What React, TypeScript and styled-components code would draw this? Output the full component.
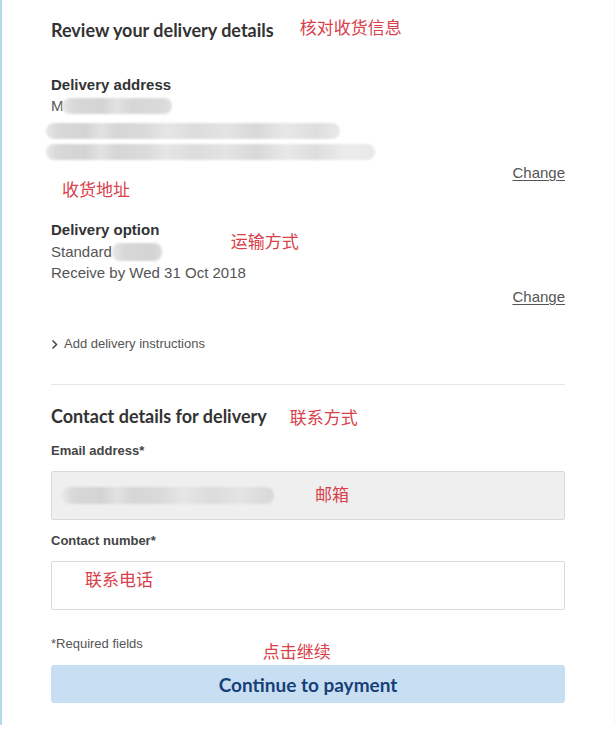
import React from "react";
import styled, { createGlobalStyle } from "styled-components";

const Global = createGlobalStyle`
  html, body { margin: 0; padding: 0; background: #ffffff; }
  body { font-family: "Liberation Sans", Arial, sans-serif; color: #444; }
`;

const Page = styled.div`
  width: 615px;
  box-sizing: border-box;
  border-left: 2px solid #b3dae9;
  border-right: 1px solid #f1f7f9;
  padding: 18px 49px 22px 49px;
  display: flex;
  flex-direction: column;
`;

const Note = styled.span<{ $mt?: number; $ml?: number }>`
  font-family: "Noto Sans CJK SC", sans-serif;
  font-size: 17px;
  line-height: 22px;
  color: #d8404a;
  margin-top: ${(p) => p.$mt ?? 0}px;
  margin-left: ${(p) => p.$ml ?? 0}px;
  white-space: nowrap;
`;

const HeadRow = styled.div<{ $gap: number; $mt?: number; $align?: string }>`
  display: flex;
  align-items: ${(p) => p.$align ?? "center"};
  gap: ${(p) => p.$gap}px;
  margin-top: ${(p) => p.$mt ?? 0}px;
`;

const Heading = styled.h2`
  margin: 0;
  font-family: Lato, "Open Sans", sans-serif;
  font-weight: 700;
  font-size: 18px;
  line-height: 24px;
  color: #333;
`;

const Label = styled.div<{ $mt?: number }>`
  font-weight: 700;
  font-size: 15px;
  line-height: 18px;
  color: #333;
  margin-top: ${(p) => p.$mt ?? 0}px;
`;

const Text = styled.div<{ $mt?: number }>`
  font-size: 15px;
  line-height: 20px;
  color: #555;
  margin-top: ${(p) => p.$mt ?? 0}px;
  display: flex;
  align-items: center;
`;

const Blur = styled.div<{ $w: number; $mt?: number; $ml?: number; $h?: number }>`
  width: ${(p) => p.$w}px;
  height: ${(p) => p.$h ?? 16}px;
  margin-top: ${(p) => p.$mt ?? 0}px;
  margin-left: ${(p) => p.$ml ?? 0}px;
  border-radius: 8px;
  filter: blur(1px);
  background: linear-gradient(
    90deg,
    #e8e8e8 0px,
    #d8d8d8 12px,
    #d4d4d4 40px,
    #e2e2e2 55px,
    #d6d6d6 70px,
    #dadada 100px,
    #e6e6e6 120px,
    #dcdcdc 150px,
    #e4e4e4 180px,
    #d8d8d8 210px,
    #e8e8e8 240px,
    #dedede 270px,
    #ececec 300px,
    #e6e6e6 340px
  );
`;

const ChangeRow = styled.div<{ $mt?: number }>`
  display: flex;
  justify-content: space-between;
  align-items: flex-start;
  margin-top: ${(p) => p.$mt ?? 0}px;
`;

const ChangeLink = styled.a`
  font-size: 15px;
  line-height: 20px;
  color: #555;
  text-decoration: underline;
  text-underline-offset: 2px;
  margin-left: auto;
  cursor: pointer;
`;

const OptionRow = styled.div`
  display: flex;
  align-items: flex-start;
  margin-top: 21px;
`;

const OptionBlock = styled.div`
  display: flex;
  flex-direction: column;
`;

const Instructions = styled.div`
  display: flex;
  align-items: center;
  gap: 6px;
  margin-top: 28px;
  font-size: 13px;
  line-height: 18px;
  color: #555;
`;

const Divider = styled.hr`
  border: none;
  border-top: 1px solid #e6e6e6;
  margin: 31px 0 0 0;
  width: 514px;
`;

const FieldLabel = styled.div<{ $mt: number }>`
  font-weight: 700;
  font-size: 13px;
  line-height: 18px;
  color: #444;
  margin-top: ${(p) => p.$mt}px;
`;

const Field = styled.div<{ $filled?: boolean }>`
  margin-top: 11px;
  width: 514px;
  height: 49px;
  box-sizing: border-box;
  border: 1px solid #d9d9d9;
  border-radius: 2px;
  background: ${(p) => (p.$filled ? "#efefef" : "#ffffff")};
  display: flex;
  align-items: flex-start;
`;

const Small = styled.div`
  font-size: 13px;
  line-height: 18px;
  color: #555;
`;

const Button = styled.button`
  margin-top: 3px;
  width: 514px;
  height: 38px;
  border: none;
  border-radius: 3px;
  background: #c8dff3;
  color: #173f78;
  font-family: Lato, "Open Sans", sans-serif;
  font-weight: 700;
  font-size: 19px;
  cursor: pointer;
`;

export default function App() {
  return (
    <>
      <Global />
      <Page>
        <HeadRow $gap={26}>
          <Heading>Review your delivery details</Heading>
          <Note $mt={-6}>核对收货信息</Note>
        </HeadRow>

        <Label $mt={34}>Delivery address</Label>
        <Text $mt={2}>
          M
          <Blur $w={110} $h={16} $ml={-2} />
        </Text>
        <Blur $w={294} $mt={7} $ml={-5} />
        <Blur $w={329} $mt={5} $ml={-5} />

        <ChangeRow $mt={3}>
          <Note $mt={15} $ml={11}>收货地址</Note>
          <ChangeLink>Change</ChangeLink>
        </ChangeRow>

        <OptionRow>
          <OptionBlock>
            <Label>Delivery option</Label>
            <Text $mt={3}>
              Standard
              <Blur $w={50} $h={18} />
            </Text>
            <Text $mt={1}>Receive by Wed 31 Oct 2018</Text>
          </OptionBlock>
          <Note $mt={9} $ml={-15}>运输方式</Note>
        </OptionRow>

        <ChangeRow $mt={4}>
          <ChangeLink>Change</ChangeLink>
        </ChangeRow>

        <Instructions>
          <svg width="7" height="11" viewBox="0 0 7 11" fill="none">
            <path d="M1.5 1.5 L5.5 5.5 L1.5 9.5" stroke="#444" strokeWidth="1.5" />
          </svg>
          Add delivery instructions
        </Instructions>

        <Divider />

        <HeadRow $gap={23} $mt={19}>
          <Heading>Contact details for delivery</Heading>
          <Note $mt={2}>联系方式</Note>
        </HeadRow>

        <FieldLabel $mt={14}>Email address*</FieldLabel>
        <Field $filled>
          <Blur $w={212} $h={17} $mt={15} $ml={10} />
          <Note $mt={11} $ml={41}>邮箱</Note>
        </Field>

        <FieldLabel $mt={12}>Contact number*</FieldLabel>
        <Field>
          <Note $mt={6} $ml={33}>联系电话</Note>
        </Field>

        <HeadRow $gap={120} $mt={25} $align="flex-start">
          <Small>*Required fields</Small>
          <Note $mt={5}>点击继续</Note>
        </HeadRow>
        <Button>Continue to payment</Button>
      </Page>
    </>
  );
}
